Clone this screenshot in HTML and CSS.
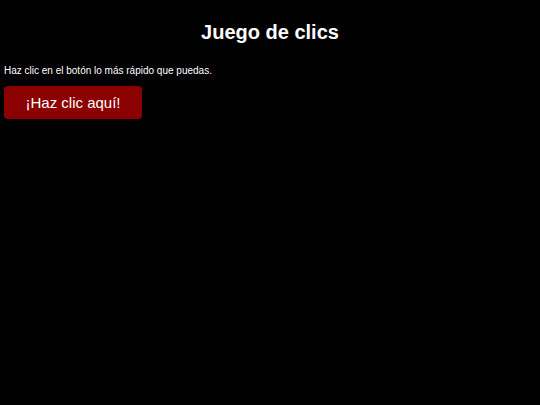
FILE: index.html
```html
<!DOCTYPE html>
<html lang="es">
<head>
<meta charset="utf-8">
<title>Juego de clics</title>
<link rel="stylesheet" href="styles.css">
</head>
<body>
<h1 class="title">Juego de clics</h1>
<p class="intro">Haz clic en el botón lo más rápido que puedas.</p>
<button class="click-btn" type="button">¡Haz clic aquí!</button>
</body>
</html>
```

FILE: styles.css
```css
html, body {
  margin: 0;
  background: #000;
}
body {
  padding: 0 4px;
  color: #fff;
  font-family: "Liberation Sans", Arial, sans-serif;
}
.title {
  margin: 21px 0 21px;
  font-size: 20px;
  font-weight: bold;
  line-height: 23px;
  text-align: center;
}
.intro {
  margin: 0 0 9px;
  font-size: 10px;
  line-height: 12px;
}
.click-btn {
  display: block;
  margin: 0;
  padding: 8px 21px;
  width: 138px;
  height: 33px;
  box-sizing: border-box;
  background: #8b0000;
  color: #fff;
  border: none;
  border-radius: 4px;
  font-family: "Liberation Sans", Arial, sans-serif;
  font-size: 15px;
  line-height: 17px;
  text-align: center;
}
```
